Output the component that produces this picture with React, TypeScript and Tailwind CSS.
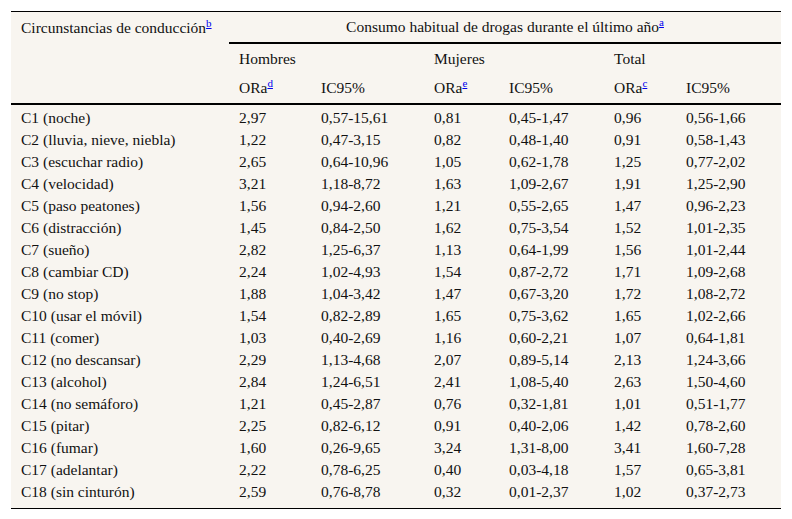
const rows = [
  ["C1 (noche)", "2,97", "0,57-15,61", "0,81", "0,45-1,47", "0,96", "0,56-1,66"],
  ["C2 (lluvia, nieve, niebla)", "1,22", "0,47-3,15", "0,82", "0,48-1,40", "0,91", "0,58-1,43"],
  ["C3 (escuchar radio)", "2,65", "0,64-10,96", "1,05", "0,62-1,78", "1,25", "0,77-2,02"],
  ["C4 (velocidad)", "3,21", "1,18-8,72", "1,63", "1,09-2,67", "1,91", "1,25-2,90"],
  ["C5 (paso peatones)", "1,56", "0,94-2,60", "1,21", "0,55-2,65", "1,47", "0,96-2,23"],
  ["C6 (distracción)", "1,45", "0,84-2,50", "1,62", "0,75-3,54", "1,52", "1,01-2,35"],
  ["C7 (sueño)", "2,82", "1,25-6,37", "1,13", "0,64-1,99", "1,56", "1,01-2,44"],
  ["C8 (cambiar CD)", "2,24", "1,02-4,93", "1,54", "0,87-2,72", "1,71", "1,09-2,68"],
  ["C9 (no stop)", "1,88", "1,04-3,42", "1,47", "0,67-3,20", "1,72", "1,08-2,72"],
  ["C10 (usar el móvil)", "1,54", "0,82-2,89", "1,65", "0,75-3,62", "1,65", "1,02-2,66"],
  ["C11 (comer)", "1,03", "0,40-2,69", "1,16", "0,60-2,21", "1,07", "0,64-1,81"],
  ["C12 (no descansar)", "2,29", "1,13-4,68", "2,07", "0,89-5,14", "2,13", "1,24-3,66"],
  ["C13 (alcohol)", "2,84", "1,24-6,51", "2,41", "1,08-5,40", "2,63", "1,50-4,60"],
  ["C14 (no semáforo)", "1,21", "0,45-2,87", "0,76", "0,32-1,81", "1,01", "0,51-1,77"],
  ["C15 (pitar)", "2,25", "0,82-6,12", "0,91", "0,40-2,06", "1,42", "0,78-2,60"],
  ["C16 (fumar)", "1,60", "0,26-9,65", "3,24", "1,31-8,00", "3,41", "1,60-7,28"],
  ["C17 (adelantar)", "2,22", "0,78-6,25", "0,40", "0,03-4,18", "1,57", "0,65-3,81"],
  ["C18 (sin cinturón)", "2,59", "0,76-8,78", "0,32", "0,01-2,37", "1,02", "0,37-2,73"],
];

const Sup = ({ children }: { children: string }) => (
  <a className="text-[11px] text-[#0000ee] underline relative -top-[6px] leading-none">{children}</a>
);

export default function App() {
  return (
    <div className="bg-white w-[792px] h-[519px] pt-[11px] pl-[11px] font-[Liberation_Serif] text-[15.5px] leading-[18px] text-[#111]">
      <table className="w-[770px] table-fixed border-collapse bg-[#f8f5f0] border-t border-b border-black font-[Liberation_Serif] text-[15.5px] leading-[18px] text-[#111]">
        <colgroup>
          <col className="w-[218px]" />
          <col className="w-[82px]" />
          <col className="w-[113px]" />
          <col className="w-[75px]" />
          <col className="w-[105px]" />
          <col className="w-[72px]" />
          <col className="w-[105px]" />
        </colgroup>
        <thead>
          <tr className="h-[31px]">
            <th rowSpan={3} className="align-top text-left font-normal pl-[10px] pt-[7px] border-b-2 border-black">
              Circunstancias de conducción<Sup>b</Sup>
            </th>
            <th colSpan={6} className="font-normal text-center border-b-2 border-black">
              Consumo habitual de drogas durante el último año<Sup>a</Sup>
            </th>
          </tr>
          <tr className="h-[31px]">
            <th colSpan={2} className="font-normal text-left pl-[10px]">Hombres</th>
            <th colSpan={2} className="font-normal text-left pl-[10px]">Mujeres</th>
            <th colSpan={2} className="font-normal text-left pl-[10px]">Total</th>
          </tr>
          <tr className="h-[30px] border-b-2 border-black">
            <th className="font-normal text-left pl-[10px]">ORa<Sup>d</Sup></th>
            <th className="font-normal text-left pl-[10px]">IC95%</th>
            <th className="font-normal text-left pl-[10px]">ORa<Sup>e</Sup></th>
            <th className="font-normal text-left pl-[10px]">IC95%</th>
            <th className="font-normal text-left pl-[10px]">ORa<Sup>c</Sup></th>
            <th className="font-normal text-left pl-[10px]">IC95%</th>
          </tr>
        </thead>
        <tbody>
          {rows.map((r, i) => (
            <tr key={i} className={i === rows.length - 1 ? "h-[30px] align-top" : "h-[22px]"}>
              {r.map((c, j) => (
                <td key={j} className="pl-[10px] pt-[5px] pb-[1px] leading-[16px] whitespace-nowrap">
                  {c}
                </td>
              ))}
            </tr>
          ))}
        </tbody>
      </table>
    </div>
  );
}
